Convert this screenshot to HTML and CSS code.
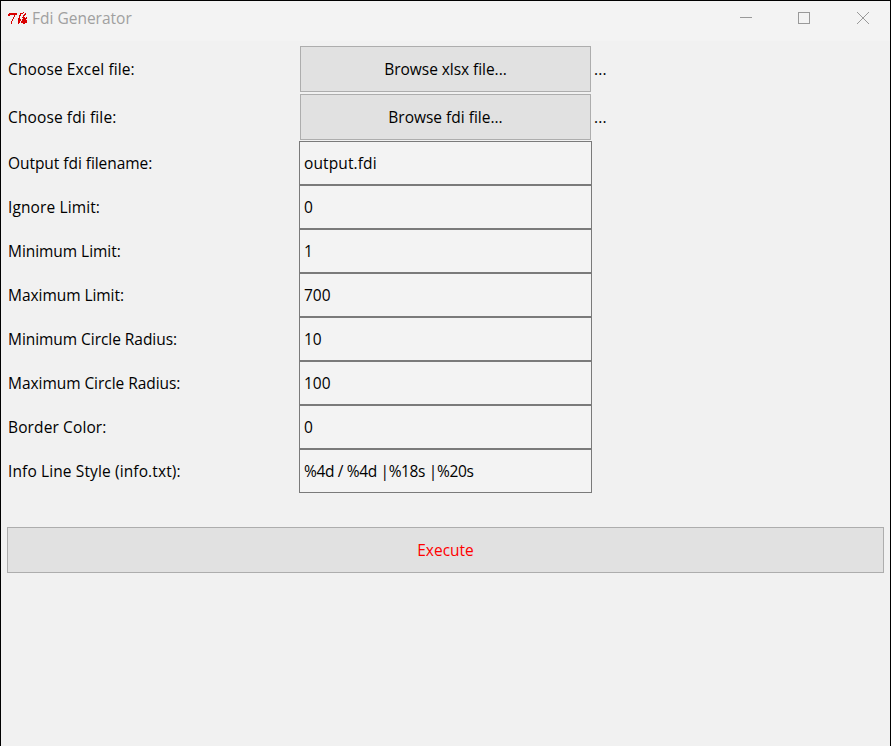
FILE: index.html
```html
<!DOCTYPE html>
<html lang="en">
<head>
<meta charset="utf-8">
<title>Fdi Generator</title>
<link rel="stylesheet" href="styles.css">
</head>
<body>
<div class="window">
  <header class="titlebar">
    <svg class="logo" width="20" height="16" viewBox="0 0 20 16" fill="#d90000" shape-rendering="crispEdges">
      <path d="M1 3h8v2H7v2H6v2H5v2H4v3H3v-3h1V9h1V7h1V5H2v1H0V4h1z"/>
      <path d="M15 2h1v1h-1v1h-2v2h-1v3h1v2h-1v2h-1v1h-1V8h1V5h1V3h3z"/>
      <path d="M17 3h1v2h-1v1h-1v1h1v1h1V7h1v2h-1v1h1v3h-2v1h-2v-1h-2v-2h1V9h1V8h-1V7h1V5h1V4h1z"/>
    </svg>
    <span class="title">Fdi Generator</span>
    <svg class="controls" width="130" height="14" viewBox="0 0 130 14" fill="none" stroke="#999" shape-rendering="crispEdges">
      <path d="M0 6.500h12M58.500 1.500h11v11h-11z"/>
      <path d="M117 1l12 12M129 1l-12 12" shape-rendering="auto"/>
    </svg>
  </header>
  <main>
    <div class="row browse"><span class="label">Choose Excel file:</span><button class="tight">Browse xlsx file...</button><span class="path">...</span></div>
    <div class="row browse"><span class="label">Choose fdi file:</span><button>Browse fdi file...</button><span class="path">...</span></div>
    <div class="row"><label class="tight" for="f1">Output fdi filename:</label><input id="f1" value="output.fdi"></div>
    <div class="row"><label for="f2">Ignore Limit:</label><input class="number" id="f2" value="0"></div>
    <div class="row"><label class="tight" for="f3">Minimum Limit:</label><input class="number" id="f3" value="1"></div>
    <div class="row"><label class="tight" for="f4">Maximum Limit:</label><input class="number" id="f4" value="700"></div>
    <div class="row"><label class="tight" for="f5">Minimum Circle Radius:</label><input class="number" id="f5" value="10"></div>
    <div class="row"><label class="tight" for="f6">Maximum Circle Radius:</label><input class="number" id="f6" value="100"></div>
    <div class="row"><label for="f7">Border Color:</label><input class="number" id="f7" value="0"></div>
    <div class="row"><label for="f8">Info Line Style (info.txt):</label><input class="format" id="f8" value="%4d / %4d |%18s |%20s"></div>
    <button class="execute">Execute</button>
  </main>
</div>
</body>
</html>
```
FILE: styles.css
```css
* { box-sizing: border-box; }
body { margin: 0; overflow: hidden; }
.window {
  height: 746px;
  border: 1px solid #000;
  border-bottom: 0;
  background: #f1f1f1;
  font: 15.5px/20px "Open Sans", "Noto Sans", sans-serif;
  letter-spacing: 0.12px;
  color: #000;
}
.titlebar {
  height: 40px;
  display: flex;
  align-items: flex-start;
  padding: 8px 20px 0 7px;
  background: #f3f3f3;
}
.logo { margin-top: 1px; }
.title { margin: -1px 0 0 4px; color: #a0a0a0; letter-spacing: 0; }
.controls { margin: 2px 0 0 auto; }
main { padding: 5px 6px 0; }
.row { display: flex; align-items: center; height: 44px; }
.row.browse { height: 46px; margin-bottom: 2px; }
.row.browse + .row:not(.browse) { margin-top: -1px; }
.label, label { width: 292px; padding-left: 1px; }
button, input { margin: 0; font: inherit; letter-spacing: inherit; color: inherit; border-radius: 0; }
button { border: 1px solid #adadad; background: #e1e1e1; padding: 0; letter-spacing: 0; }
.browse button { width: 291px; height: 46px; margin-left: 1px; }
.tight, .browse .tight { letter-spacing: -0.05px; }
.path { margin-left: 3px; }
input { width: 293px; height: 44px; border: 1px solid #7a7a7a; background: #f3f3f3; padding: 0 4px; outline: 0; }
.number { letter-spacing: 0; }
.format { letter-spacing: -0.36px; }
.execute { display: block; width: 877px; height: 46px; margin-top: 34px; color: #f00; }
```
